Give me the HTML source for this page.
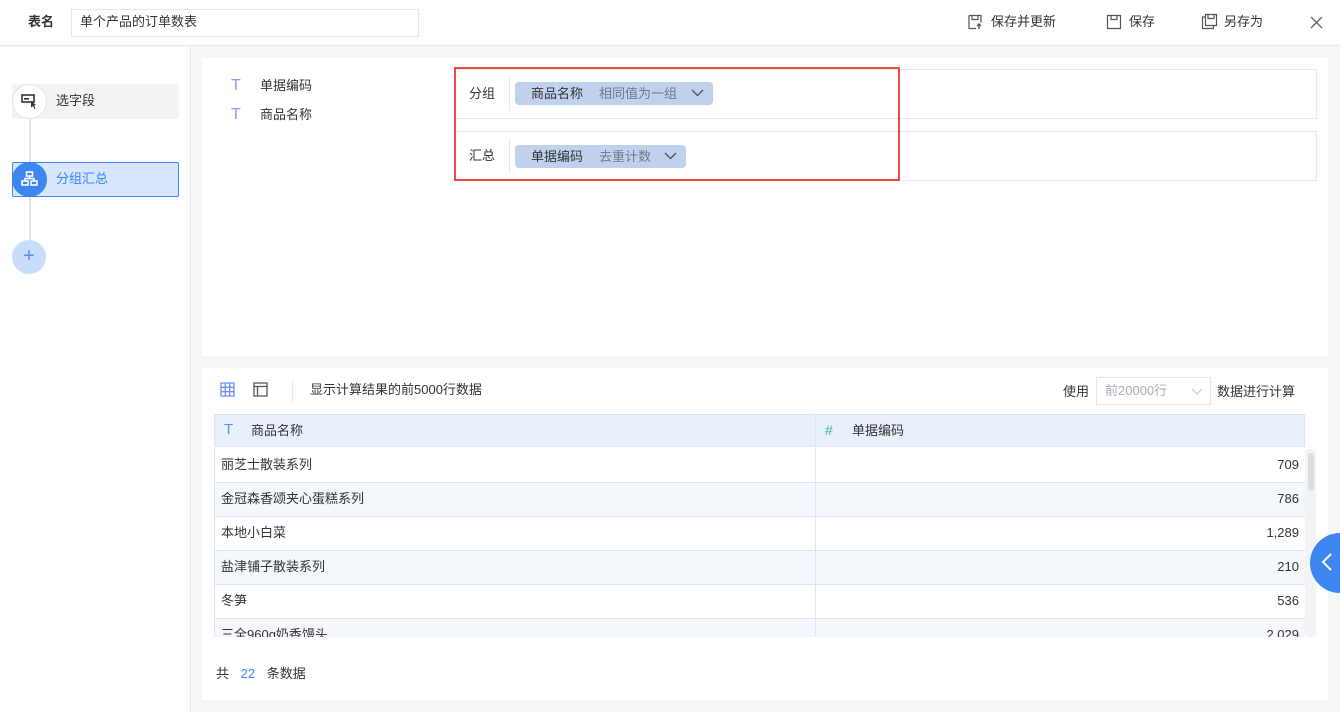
<!DOCTYPE html><html><head><meta charset="utf-8"><style>
*{margin:0;padding:0;box-sizing:border-box}
body{width:1340px;height:712px;overflow:hidden;background:#f5f6f8;font-family:"Liberation Sans","Noto Sans CJK SC",sans-serif;font-size:13px;line-height:16px;color:#333;position:relative}
.a{position:absolute}
.hdr{left:0;top:0;width:1340px;height:46px;background:#fff;border-bottom:1px solid #e6e8eb}
.side{left:0;top:47px;width:191px;height:665px;background:#fff;border-right:1px solid #e6e8eb}
.pill{background:#c0d1ee;border-radius:4px;height:23px;line-height:23px;padding-left:16px;color:#333}
.pill span{color:#707a8a;margin-left:16px}
td{border-bottom:1px solid #d9e6f8;height:34px;padding:0 6px}
</style></head><body>
<div class="a hdr">
<div class="a" style="left:28px;top:14px;font-weight:bold">表名</div>
<div class="a" style="left:71px;top:9px;width:348px;height:28px;border:1px solid #e3e5e8;padding:4px 8px">单个产品的订单数表</div>
<svg class="a" style="left:967px;top:14px" width="16" height="16" viewBox="0 0 16 16" fill="none" stroke="#555" stroke-width="1.2"><path d="M2 1.5h12v7M2 1.5v13h7M5 1.5v4h6v-4"/><path d="M12 15v-5M10 12l2-2 2 2" stroke-width="1.4"/></svg>
<div class="a" style="left:991px;top:14px">保存并更新</div>
<svg class="a" style="left:1106px;top:14px" width="16" height="16" viewBox="0 0 16 16" fill="none" stroke="#555" stroke-width="1.2"><path d="M1.5 1.5h13v13h-13z M5 1.5v4h6v-4"/></svg>
<div class="a" style="left:1129px;top:14px">保存</div>
<svg class="a" style="left:1201px;top:13px" width="17" height="17" viewBox="0 0 17 17" fill="none" stroke="#555" stroke-width="1.2"><path d="M4.5 1.5h11v11h-11z M7 1.5v4h6v-4 M4.5 4H1.5v11.5h11v-3"/></svg>
<div class="a" style="left:1224px;top:14px">另存为</div>
<svg class="a" style="left:1310px;top:16px" width="13" height="13" viewBox="0 0 13 13" stroke="#667" stroke-width="1.3"><path d="M1 1l11 11M12 1L1 12"/></svg>
</div>
<div class="a side"></div>
<div class="a" style="left:29px;top:101px;width:2px;height:156px;background:#e3e5e8"></div>
<div class="a" style="left:12px;top:84px;width:167px;height:35px;background:#f2f3f5;border-radius:2px"></div>
<div class="a" style="left:56px;top:93px">选字段</div>
<div class="a" style="left:12px;top:84px;width:35px;height:35px;border-radius:50%;background:#fff;border:1px solid #e3e5e8"></div>
<svg class="a" style="left:21px;top:94px" width="18" height="16" viewBox="0 0 18 16"><rect x="1" y="1" width="12" height="7" fill="none" stroke="#333" stroke-width="1.6"/><rect x="3" y="4" width="5" height="1.6" fill="#333"/><path d="M10 7l5 4-2 .5 1.5 3-1 .5-1.5-3-2 1.5z" fill="#333"/></svg>
<div class="a" style="left:12px;top:162px;width:167px;height:35px;background:#d6e6fc;border:1px solid #3d85f0;border-radius:2px"></div>
<div class="a" style="left:56px;top:171px;color:#3d85f0">分组汇总</div>
<div class="a" style="left:12px;top:162px;width:35px;height:35px;border-radius:50%;background:#3d85f0"></div>
<svg class="a" style="left:21px;top:171px" width="17" height="16" viewBox="0 0 17 16" fill="none" stroke="#fff" stroke-width="1.6"><rect x="5.5" y="1" width="6" height="4"/><rect x="1" y="10" width="6" height="4"/><rect x="10" y="10" width="6" height="4"/><path d="M8.5 5v2.5M4 10V7.5h9V10"/></svg>
<div class="a" style="left:12px;top:240px;width:34px;height:34px;border-radius:50%;background:#c8dcfb;color:#5d8ee8;text-align:center;line-height:32px;font-size:20px">+</div>

<div class="a" style="left:202px;top:58px;width:1126px;height:298px;background:#fff"></div>
<div class="a" style="left:231px;top:78px;color:#a58ef0;font-size:16px">T</div>
<div class="a" style="left:260px;top:78px">单据编码</div>
<div class="a" style="left:231px;top:107px;color:#a58ef0;font-size:16px">T</div>
<div class="a" style="left:260px;top:107px">商品名称</div>
<div class="a" style="left:455px;top:69px;width:862px;height:50px;border:1px solid #e6e8eb"></div>
<div class="a" style="left:455px;top:131px;width:862px;height:50px;border:1px solid #e6e8eb"></div>
<div class="a" style="left:509px;top:77px;width:1px;height:34px;background:#e6e8eb"></div>
<div class="a" style="left:509px;top:139px;width:1px;height:34px;background:#e6e8eb"></div>
<div class="a" style="left:469px;top:86px">分组</div>
<div class="a" style="left:469px;top:148px">汇总</div>
<div class="a pill" style="left:515px;top:82px;width:198px">商品名称<span>相同值为一组</span></div>
<div class="a pill" style="left:515px;top:145px;width:171px">单据编码<span>去重计数</span></div>
<svg class="a" style="left:691px;top:89px" width="13" height="8" viewBox="0 0 13 8" fill="none" stroke="#556" stroke-width="1.4"><path d="M1 1l5.5 5.5L12 1"/></svg>
<svg class="a" style="left:664px;top:152px" width="13" height="8" viewBox="0 0 13 8" fill="none" stroke="#556" stroke-width="1.4"><path d="M1 1l5.5 5.5L12 1"/></svg>
<div class="a" style="left:454px;top:67px;width:446px;height:114px;border:2px solid #f04848"></div>

<div class="a" style="left:202px;top:368px;width:1126px;height:332px;background:#fff"></div>
<svg class="a" style="left:220px;top:382px" width="15" height="15" viewBox="0 0 15 15" fill="none" stroke="#6b8ef5" stroke-width="1.3"><path d="M1 1h13v13H1zM1 5.3h13M1 9.7h13M5.3 1v13M9.7 1v13"/></svg>
<svg class="a" style="left:253px;top:382px" width="15" height="15" viewBox="0 0 15 15" fill="none" stroke="#555" stroke-width="1.3"><path d="M1 1h13v13H1zM1 4.5h13M4.5 4.5V14"/></svg>
<div class="a" style="left:292px;top:380px;width:1px;height:22px;background:#e6e8eb"></div>
<div class="a" style="left:310px;top:382px">显示计算结果的前5000行数据</div>
<div class="a" style="left:1063px;top:384px">使用</div>
<div class="a" style="left:1096px;top:377px;width:115px;height:28px;border:1px solid #e3e5e8;color:#aab;padding:5px 8px">前20000行</div>
<svg class="a" style="left:1191px;top:388px" width="12" height="7" viewBox="0 0 12 7" fill="none" stroke="#c5c9d0" stroke-width="1.2"><path d="M1 1l5 5 5-5"/></svg>
<div class="a" style="left:1217px;top:384px">数据进行计算</div>
<div class="a" style="left:214px;top:414px;width:1091px;height:33px;background:#e8f0fc;border:1px solid #d9e6f8"></div>
<div class="a" style="left:224px;top:422px;color:#5d8ee8;font-size:15px">T</div>
<div class="a" style="left:251px;top:423px">商品名称</div>
<div class="a" style="left:815px;top:414px;width:1px;height:33px;background:#d9e6f8"></div>
<div class="a" style="left:825px;top:422px;color:#3bb5b0;font-size:14px">#</div>
<div class="a" style="left:852px;top:423px">单据编码</div>
<div class="a" style="left:214px;top:448px;width:1091px;height:189px;overflow:hidden">
<table style="border-collapse:collapse;width:1091px;border-left:1px solid #d9e6f8">
<tr><td style="width:601px;border-right:1px solid #d9e6f8">丽芝士散装系列</td><td align="right">709</td></tr>
<tr style="background:#f4f7fc"><td style="border-right:1px solid #d9e6f8">金冠森香颂夹心蛋糕系列</td><td align="right">786</td></tr>
<tr><td style="border-right:1px solid #d9e6f8">本地小白菜</td><td align="right">1,289</td></tr>
<tr style="background:#f4f7fc"><td style="border-right:1px solid #d9e6f8">盐津铺子散装系列</td><td align="right">210</td></tr>
<tr><td style="border-right:1px solid #d9e6f8">冬笋</td><td align="right">536</td></tr>
<tr style="background:#f4f7fc"><td style="border-right:1px solid #d9e6f8">三全960g奶香馒头</td><td align="right">2,029</td></tr>
</table></div>
<div class="a" style="left:1305px;top:449px;width:11px;height:188px;background:#f2f3f5;border-radius:4px"></div>
<div class="a" style="left:1308px;top:453px;width:6px;height:38px;background:#dcdee2;border-radius:3px"></div>
<div class="a" style="left:216px;top:666px">共 <span style="color:#3d85f0;margin:0 8px">22</span> 条数据</div>
<div class="a" style="left:1310px;top:533px;width:60px;height:60px;border-radius:50%;background:#3d85f0"></div>
<svg class="a" style="left:1321px;top:552px" width="12" height="20" viewBox="0 0 12 20" fill="none" stroke="#fff" stroke-width="2"><path d="M10 2L2 10l8 8"/></svg>
</body></html>
